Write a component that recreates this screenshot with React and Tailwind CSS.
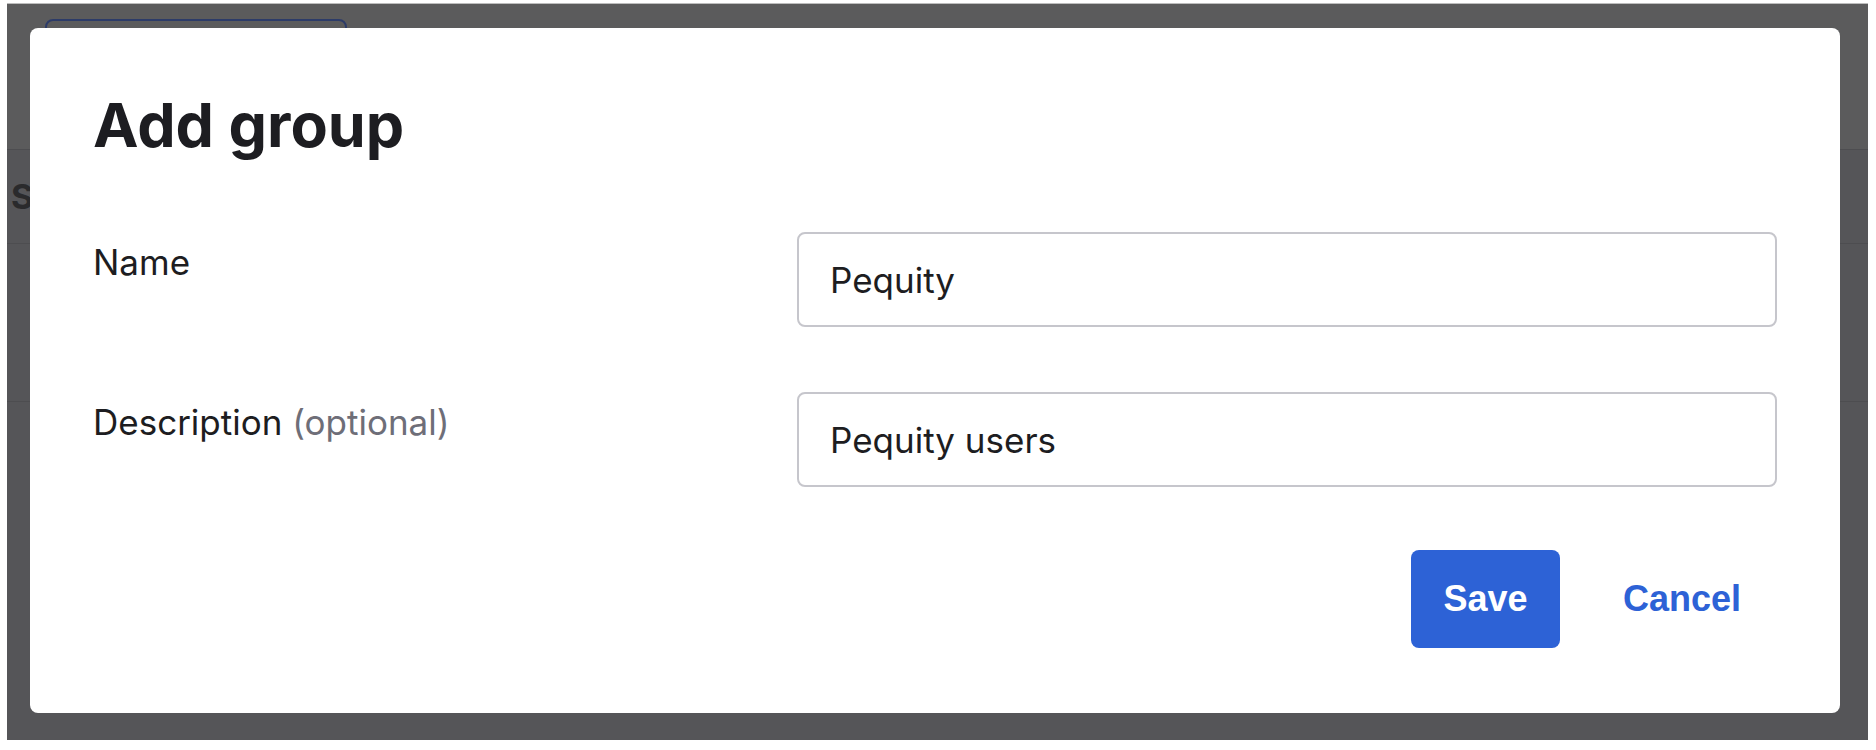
import React, { useState } from "react";

const AddGroup = () => {
  const [form, setForm] = useState({ name: "Pequity", description: "Pequity users" });

  const handleChange = (e) => {
    const { name, value } = e.target;
    setForm((prev) => ({ ...prev, [name]: value }));
  };

  return (
    <div className="w-[1876px] h-[750px] bg-white pt-[3px] pl-[7px] pr-[8px] pb-[10px] overflow-hidden">
      <div className="relative w-full h-full overflow-hidden bg-[#555558] border-t border-[#bdbdbd]">
        {/* page behind the overlay */}
        <div className="bg-[#5b5b5c] h-[145px] pl-[38px] pt-[15px]">
          <div className="w-[302px] h-[80px] border-2 border-[#2c3b68] rounded-lg" />
        </div>
        <div className="border-t border-[#4d4d50] h-[94px] flex items-center pl-[4px]">
          <span className="text-[34px] font-bold text-[#2a2a2c] font-['Inter',sans-serif]">
            S
          </span>
        </div>
        <div className="border-t border-[#4d4d50] h-[158px]" />
        <div className="border-t border-[#4d4d50]" />

        {/* modal */}
        <div className="absolute left-[23px] top-[24px] right-[28px] bottom-[27px] bg-white rounded-lg px-[63px] pt-[61px] pb-[65px] font-['Inter',sans-serif] text-[#1d1d21]">
          <h1 className="text-[61px] leading-[72px] font-bold">Add group</h1>

          <div className="mt-[71px] grid grid-cols-[704px_1fr] gap-y-[65px]">
            {/* Name */}
            <label className="pt-[6px] text-[35px] leading-[49px]">Name</label>
            <input
              name="name"
              value={form.name}
              onChange={handleChange}
              className="h-[95px] w-full border-[2.5px] border-[#c6c6cc] rounded-lg px-[31px] text-[35px] text-[#1d1d21] outline-none"
            />

            {/* Description */}
            <label className="pt-[6px] text-[35px] leading-[49px]">
              Description <span className="text-[#6e6e78]">(optional)</span>
            </label>
            <input
              name="description"
              value={form.description}
              onChange={handleChange}
              className="h-[95px] w-full border-[2.5px] border-[#c6c6cc] rounded-lg px-[31px] text-[35px] text-[#1d1d21] outline-none"
            />
          </div>

          <div className="mt-[63px] flex justify-end gap-[27px] font-['Liberation_Sans',Arial,sans-serif]">
            <button className="w-[149px] h-[98px] rounded-lg bg-[#2d62d6] text-white text-[36px] font-bold">
              Save
            </button>
            <button className="h-[98px] px-[36px] text-[#2d62d6] text-[36px] font-bold">
              Cancel
            </button>
          </div>
        </div>
      </div>
    </div>
  );
};

export default function App() {
  return <AddGroup />;
}
